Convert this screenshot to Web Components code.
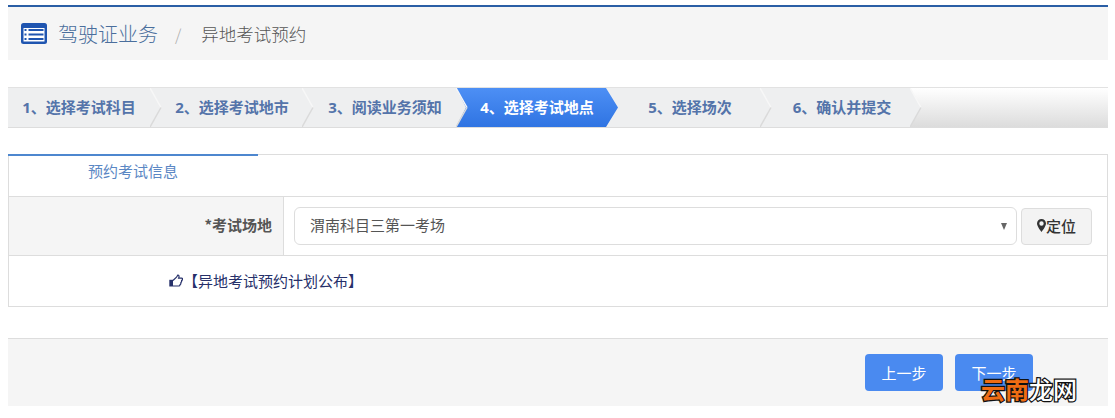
<!DOCTYPE html>
<html lang="zh">
<head>
<meta charset="utf-8">
<style>
  html, body { margin: 0; background: #fff; }
  body {
    padding: 5px 7px 0 8px;
    font-family: "Open Sans", "Noto Sans CJK SC", sans-serif;
    position: relative;
    height: 413px;
    box-sizing: border-box;
    overflow: hidden;
  }
</style>
</head>
<body>
<page-header section="驾驶证业务" current="异地考试预约"></page-header>
<step-bar>
  <step-item w="142" pad="0" first>1、选择考试科目</step-item>
  <step-item w="152" pad="12">2、选择考试地市</step-item>
  <step-item w="154" pad="12">3、阅读业务须知</step-item>
  <step-item w="150" pad="12" active>4、选择考试地点</step-item>
  <step-item w="154" pad="14">5、选择场次</step-item>
  <step-item w="150" pad="14" last>6、确认并提交</step-item>
</step-bar>
<info-panel></info-panel>
<page-footer></page-footer>
<water-mark></water-mark>

<script>
class PageHeader extends HTMLElement {
  constructor() {
    super();
    this.attachShadow({ mode: "open" });
    this.shadowRoot.innerHTML = `
      <style>
        :host { display: flex; align-items: center; height: 53px; background: #f5f5f5; border-top: 2px solid #2a5ea5; padding-left: 13px; font-family: "Noto Sans CJK SC", sans-serif; font-weight: 300; }
        svg { width: 26px; height: 21px; margin-right: 11px; }
        .section { font-size: 20px; color: #4a6e9c; }
        .sep { margin: 0 20px 0 17px; color: #aaa; font-size: 16px; }
        .current { font-size: 17.500px; color: #555; }
      </style>
      <svg viewBox="0 0 26 21">
        <rect x="0" y="0" width="26" height="21" rx="2.500" fill="#1f55b0"/>
        <rect x="2.500" y="5" width="21" height="13.500" fill="#fff"/>
        <path d="M3.500 7h2M3.500 11.500h2M3.500 16h2M7.500 7h15M7.500 11.500h15M7.500 16h15" stroke="#1f55b0" stroke-width="2"/>
      </svg>
      <span class="section">${this.getAttribute("section")}</span>
      <span class="sep">/</span>
      <span class="current">${this.getAttribute("current")}</span>`;
  }
}

class StepBar extends HTMLElement {
  constructor() {
    super();
    this.attachShadow({ mode: "open" });
    this.shadowRoot.innerHTML = `
      <style>
        :host { display: flex; height: 41px; margin-top: 27px; box-sizing: border-box; border-top: 1px solid #e2e2e2; border-bottom: 1px solid #ddd; background: linear-gradient(#fff, #dcdcdc); }
      </style>
      <slot></slot>`;
  }
}

class StepItem extends HTMLElement {
  constructor() {
    super();
    this.attachShadow({ mode: "open" });
    const active = this.hasAttribute("active");
    const first = this.hasAttribute("first");
    this.shadowRoot.innerHTML = `
      <style>
        :host { display: block; position: relative; flex: none; width: ${this.getAttribute("w")}px; height: 39px; }
        .bg { position: absolute; top: 0; bottom: 0; left: 0; right: -12px; z-index: ${active ? 2 : 1};
          background: ${active ? "linear-gradient(#4d8ff5, #2f74e2)" : "#eeeff0"};
          clip-path: polygon(0 0, calc(100% - 12px) 0, 100% 50%, calc(100% - 12px) 100%, 0 100%${first ? "" : ", 10px 50%"}); }
        .edge { position: absolute; top: 0; right: -12px; width: 12px; height: 39px; z-index: 3; }
        .label { position: relative; z-index: 4; display: block; line-height: 39px; text-align: center; padding-left: ${this.getAttribute("pad")}px; font-size: 15px; font-weight: 700; white-space: nowrap; color: ${active ? "#fff" : "#5474aa"}; }
      </style>
      <div class="bg"></div>
      ${active ? "" : `<svg class="edge" viewBox="0 0 12 39"><path d="M0 0L11 19.500" stroke="#f7f7f7" stroke-width="1.500" fill="none"/><path d="M11 19.500L0 39" stroke="#dadada" stroke-width="1.500" fill="none"/></svg>`}
      <span class="label"><slot></slot></span>`;
  }
}

class InfoPanel extends HTMLElement {
  constructor() {
    super();
    this.attachShadow({ mode: "open" });
    this.shadowRoot.innerHTML = `
      <style>
        :host { display: block; margin-top: 26px; width: 1100px; box-sizing: border-box; border: 1px solid #ddd; border-top: 0; position: relative; font-family: "Noto Sans CJK SC", sans-serif; }
        .tabs { height: 43px; border-top: 1px solid #ddd; border-bottom: 1px solid #ddd; box-sizing: border-box; position: relative; }
        .tab { position: absolute; left: -1px; top: -1px; width: 250px; height: 2px; background: #4d87cf; }
        .tabs span { display: block; padding-left: 79px; line-height: 31px; font-size: 15px; color: #5b87c4; }
        .row { display: flex; height: 59px; border-bottom: 1px solid #ddd; box-sizing: border-box; }
        .lab { width: 275px; box-sizing: border-box; background: #f5f5f5; border-right: 1px solid #ddd; text-align: right; padding-right: 11px; line-height: 55px; font-size: 15px; font-weight: 700; color: #555; }
        .fld { flex: 1; display: flex; align-items: center; padding: 0 15px 0 10px; gap: 4px; }
        .sel { flex: 1; height: 38px; box-sizing: border-box; border: 1px solid #ddd; border-radius: 6px; padding-left: 15px; line-height: 33px; font-size: 15px; color: #555; position: relative; background: #fff; }
        .sel i { position: absolute; right: 9px; top: 15px; width: 0; height: 0; border: 3.500px solid transparent; border-top: 7px solid #666; border-bottom: 0; }
        .btn { width: 71px; height: 37px; box-sizing: border-box; background: #f3f3f3; border: 1px solid #ddd; border-radius: 4px; display: flex; align-items: center; justify-content: center; padding-bottom: 2px; font-size: 15px; font-weight: 500; color: #333; }
        .btn svg { width: 9px; height: 13px; flex: none; }
        .note { height: 50px; display: flex; align-items: center; padding: 0 0 2px 160px; box-sizing: border-box; font-size: 15px; color: #26306a; }
        .note svg { width: 14px; height: 13px; flex: none; }
      </style>
      <div class="tabs"><div class="tab"></div><span>预约考试信息</span></div>
      <div class="row">
        <div class="lab">*考试场地</div>
        <div class="fld">
          <div class="sel">渭南科目三第一考场<i></i></div>
          <div class="btn">
            <svg viewBox="0 0 9 13"><path fill-rule="evenodd" fill="#333" d="M4.500 0C2 0 0 2 0 4.500 0 7.500 4.500 13 4.500 13S9 7.500 9 4.500C9 2 7 0 4.500 0ZM4.500 2.300a2.200 2.200 0 1 1 0 4.400 2.200 2.200 0 0 1 0-4.400Z"/></svg>定位
          </div>
        </div>
      </div>
      <div class="note">
        <svg viewBox="0 0 14 13"><path fill="#26306a" d="M0.300 5.800h3.700v6.700H0.300z"/><path fill="none" stroke="#26306a" stroke-width="1.200" d="M4 6.500L7.500 3.200C8 2.500 8.300 1.800 8.800 1 10 1 10.400 2.500 9.600 4.200H12.600C13.900 4.200 13.900 6.400 12.600 6.400 12.800 7.500 12.400 8.300 11.900 8.600 12 9.800 11.600 10.400 11 10.700 11 11.700 10.500 12 9.800 12H4"/></svg>【异地考试预约计划公布】
      </div>`;
  }
}

class PageFooter extends HTMLElement {
  constructor() {
    super();
    this.attachShadow({ mode: "open" });
    this.shadowRoot.innerHTML = `
      <style>
        :host { display: flex; justify-content: flex-end; gap: 12px; margin-top: 31px; height: 68px; width: 1100px; box-sizing: border-box; background: #f5f5f5; border-top: 1px solid #ddd; padding: 15px 75px 0 0; font-family: "Noto Sans CJK SC", sans-serif; }
        button { width: 78px; height: 37px; border: 0; border-radius: 4px; background: #4a8af0; color: #fff; font: 15px "Noto Sans CJK SC", sans-serif; padding: 0; }
      </style>
      <button>上一步</button><button>下一步</button>`;
  }
}

// site stamp pasted over the corner of the screenshot
class WaterMark extends HTMLElement {
  constructor() {
    super();
    this.attachShadow({ mode: "open" });
    this.shadowRoot.innerHTML = `
      <style>
        :host { display: block; position: absolute; left: 981px; top: 374px; font: 700 24px/30px "Noto Sans CJK SC", sans-serif; white-space: nowrap; }
        span { -webkit-text-stroke: 2.500px #111; paint-order: stroke fill; }
        .o { color: #ef6c13; }
        .w { color: #fff; font-weight: 500; }
      </style>
      <span class="o">云南</span><span class="w">龙网</span>`;
  }
}

customElements.define("page-header", PageHeader);
customElements.define("step-bar", StepBar);
customElements.define("step-item", StepItem);
customElements.define("info-panel", InfoPanel);
customElements.define("page-footer", PageFooter);
customElements.define("water-mark", WaterMark);
</script>
</body>
</html>
